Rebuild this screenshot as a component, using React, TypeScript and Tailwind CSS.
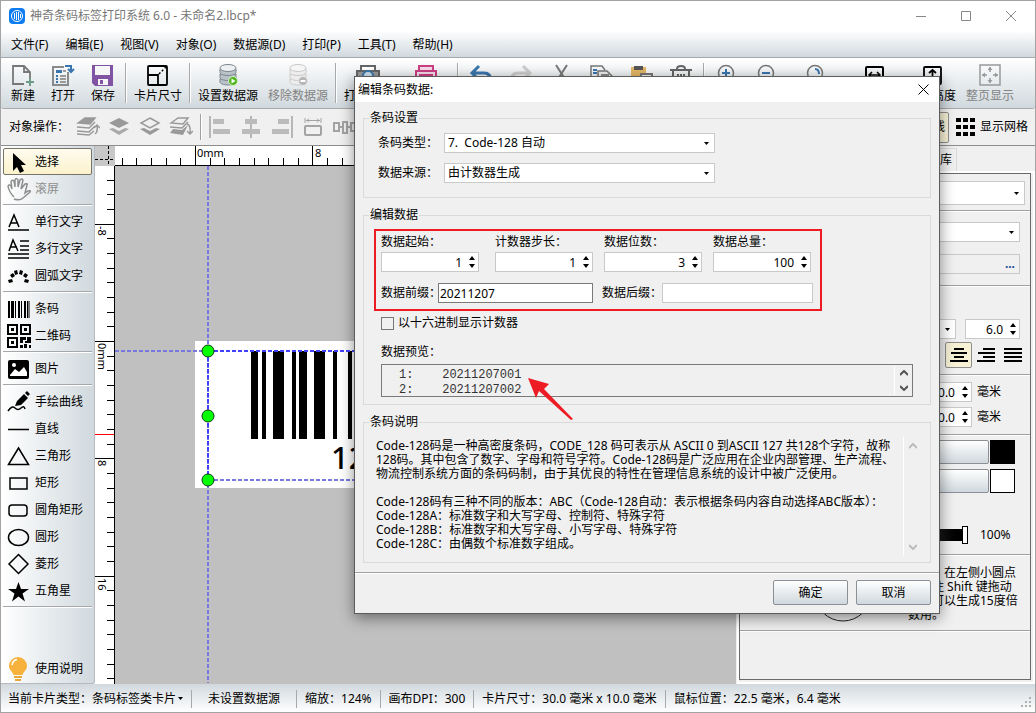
import React from 'react';

const separator = "h-[2px] shrink-0 border-t border-[#a0a0a0] bg-white";
const gradientButton = "border border-[#8a9095] rounded-[2px] bg-linear-to-b from-white to-[#d0d8dd]";

const menus = ['文件(F)', '编辑(E)', '视图(V)', '对象(O)', '数据源(D)', '打印(P)', '工具(T)', '帮助(H)'];

/* ---------- icons ---------- */

const Svg: React.FC<{ size?: number; children: React.ReactNode }> = ({ size = 24, children }) => (
  <svg width={size} height={size} viewBox="0 0 24 24" fill="none" stroke="currentColor" strokeWidth="2" aria-hidden="true">
    {children}
  </svg>
);

const Database: React.FC<{ off?: boolean }> = ({ off }) => (
  <Svg>
    <g stroke={off ? '#c9c9c9' : '#7d858b'} strokeWidth="1" fill={off ? '#ededed' : '#b9c2c8'}>
      <path d="M4 16v3c0 1.700 3.500 3 8 3s8-1.300 8-3v-3z" />
      <path d="M4 11v3.500c0 1.700 3.500 3 8 3s8-1.300 8-3V11z" />
      <path d="M4 6v3.500c0 1.700 3.500 3 8 3s8-1.300 8-3V6z" />
      <ellipse cx="12" cy="5" rx="8" ry="3.500" fill={off ? '#f6f6f6' : '#eef1f3'} />
    </g>
    <circle cx="17" cy="18" r="4.500" fill={off ? '#b5b5b5' : '#52b51e'} stroke={off ? '#e6e6e6' : '#d9f0cb'} strokeWidth="1" />
    {off ? <path d="M14.500 18h5" stroke="#fff" /> : <path d="M15.500 15.500v5l4-2.500z" fill="#fff" stroke="none" />}
  </Svg>
);

const icons: Record<string, React.ReactNode> = {
  new: (
    <Svg>
      <path d="M13 21H2V3h11l6 6v6M13 3v6h6" stroke="#777" strokeWidth="1.800" />
      <path d="M19 15v8M15 19h8" stroke="#6f9c86" />
    </Svg>
  ),
  open: (
    <Svg>
      <path d="M13 4H2v18h15V9" stroke="#8a8a8a" />
      <path d="M5 7h6v3H5z" fill="#3a76ad" stroke="none" />
      <path d="M5 13h2M5 16h2M5 19h2" stroke="#3a76ad" />
      <path d="M9 13h6M9 16h6M9 19h6M12 8h3" stroke="#9a9a9a" />
      <path d="M14 3h6v5M17 6l3 3 3-3" stroke="#3a76ad" />
    </Svg>
  ),
  save: (
    <Svg>
      <path d="M1 2h21v21H4l-3-3z" fill="#8054a3" stroke="none" />
      <path d="M4 3h15v9H4zM7 16h10v6H7z" fill="#f6f6f6" stroke="none" />
      <path d="M9 17h3v4H9z" fill="#8054a3" stroke="none" />
    </Svg>
  ),
  card: (
    <Svg>
      <rect x="2" y="3" width="19" height="19" rx="1" strokeWidth="1.800" />
      <path d="M2 12h10v10" strokeWidth="1.800" />
      <path d="M13 11l7-7" strokeDasharray="2 2" strokeWidth="1.500" />
    </Svg>
  ),
  db: <Database />,
  dbOff: <Database off />,
  preview: (
    <Svg>
      <path d="M5 8V3h14v5M1 8h22v10H1z" stroke="#666" fill="#9a9a9a" />
      <path d="M6 4h12v3H6z" fill="#fff" stroke="none" />
      <circle cx="12" cy="13" r="5" stroke="#3a76ad" fill="#cfe0ee" />
    </Svg>
  ),
  print: (
    <Svg>
      <path d="M5 7V3h14v4M2 18V8h20v10zM5 12h14" stroke="#cc3f85" fill="#f6dce9" />
    </Svg>
  ),
  undo: (
    <Svg>
      <path d="M10 3L3 10l7 7M3 10h12q7 0 7 8" stroke="#3a76ad" strokeWidth="3" />
    </Svg>
  ),
  redo: (
    <Svg>
      <path d="M14 3l7 7-7 7M21 10H9q-7 0-7 8" stroke="#cdcdcd" strokeWidth="3" />
    </Svg>
  ),
  cut: (
    <Svg>
      <path d="M7 2l9 14M18 2L9 16" stroke="#777" />
      <circle cx="7" cy="19" r="3" stroke="#666" />
      <circle cx="17" cy="19" r="3" stroke="#666" />
    </Svg>
  ),
  copy: (
    <Svg>
      <path d="M9 18H2V3h11l3 4" stroke="#777" strokeWidth="1.500" />
      <path d="M4 7h4M4 10h4M4 14h4" stroke="#3a76ad" />
      <path d="M9 8h9l5 5v9H9z" stroke="#777" strokeWidth="1.500" fill="#eee" />
      <path d="M12 12h8" stroke="#888" />
    </Svg>
  ),
  paste: (
    <Svg>
      <path d="M2 4h15v16H2z" fill="#e5b765" stroke="none" />
      <path d="M5 3h9v4H5z" fill="#555" stroke="none" />
      <path d="M12 11h11v12H12z" stroke="#777" fill="#f4f4f4" />
      <path d="M14 14h7" stroke="#888" />
    </Svg>
  ),
  trash: (
    <Svg>
      <path d="M1 7h22M8 6q0-3 4-3t4 3M4 8v14h16V8M9 11v8M12 11v8M15 11v8" stroke="#666" />
    </Svg>
  ),
  zoomIn: (
    <Svg>
      <circle cx="11" cy="10" r="7.500" stroke="#777" strokeWidth="1.500" />
      <path d="M7 10h8M11 6v8" stroke="#3a76ad" />
    </Svg>
  ),
  zoomOut: (
    <Svg>
      <circle cx="11" cy="10" r="7.500" stroke="#777" strokeWidth="1.500" />
      <path d="M7 10h8" stroke="#3a76ad" />
    </Svg>
  ),
  zoom: (
    <Svg>
      <circle cx="11" cy="10" r="7.500" stroke="#777" strokeWidth="1.500" />
      <path d="M11 6q4 0 4 5" stroke="#3a76ad" />
    </Svg>
  ),
  fitWidth: (
    <Svg>
      <rect x="4" y="4" width="17" height="17" rx="1" />
      <path d="M7 12h11M10 9l-3 3 3 3M15 9l3 3-3 3" strokeWidth="1.500" />
    </Svg>
  ),
  fitHeight: (
    <Svg>
      <rect x="4" y="4" width="17" height="17" rx="1" strokeWidth="1.800" />
      <path d="M12.500 7v11M9 10l3.500-3 3.500 3" strokeWidth="1.800" />
    </Svg>
  ),
  fitPage: (
    <Svg>
      <rect x="2" y="2" width="20" height="20" strokeWidth="1.500" stroke="#999" />
      <path d="M12 4v5M12 20v-5M4 12h5M20 12h-5" stroke="#999" strokeWidth="1.500" />
      <path d="M9.500 7l2.500-3 2.500 3zM9.500 17l2.500 3 2.500-3zM7 9.500l-3 2.500 3 2.500zM17 9.500l3 2.500-3 2.500z" fill="#999" stroke="none" />
    </Svg>
  ),
};

/* ---------- toolbar ---------- */

interface ToolItemProps {
  icon: string;
  label: string;
  disabled?: boolean;
  iconOnly?: boolean;
  wide?: string;
}

const ToolItem: React.FC<ToolItemProps> = ({ icon, label, disabled, iconOnly, wide = 'w-[40px]' }) => (
  <button
    aria-label={label}
    className={`${wide} flex shrink-0 flex-col items-center pt-[5px] ${disabled ? 'text-[#838383]' : 'text-black'}`}
  >
    {icons[icon]}
    {!iconOnly && <span className="h-[18px] leading-[18px]">{label}</span>}
  </button>
);

const Divider = () => <span className="mx-[2px] my-[5px] w-[2px] shrink-0 border-l border-[#a9a9a9] bg-white" />;

const Toolbar = () => (
  <div className="flex h-[51px] shrink-0 overflow-hidden rounded-b-[3px] border-b border-[#a5a9ac] bg-linear-to-b from-white to-[#d1d9de] pl-[2px]">
    <ToolItem icon="new" label="新建" />
    <ToolItem icon="open" label="打开" />
    <ToolItem icon="save" label="保存" />
    <Divider />
    <ToolItem icon="card" label="卡片尺寸" wide="w-[58px]" />
    <Divider />
    <ToolItem icon="db" label="设置数据源" wide="w-[70px]" />
    <ToolItem icon="dbOff" label="移除数据源" wide="w-[70px]" disabled />
    <Divider />
    <ToolItem icon="preview" label="打印预览" wide="w-[58px]" />
    <ToolItem icon="print" label="打印标签" wide="w-[58px]" iconOnly />
    <Divider />
    <ToolItem icon="undo" label="撤消" iconOnly />
    <ToolItem icon="redo" label="重做" disabled iconOnly />
    <ToolItem icon="cut" label="剪切" iconOnly />
    <ToolItem icon="copy" label="复制" iconOnly />
    <ToolItem icon="paste" label="粘贴" iconOnly />
    <ToolItem icon="trash" label="删除" iconOnly />
    <Divider />
    <ToolItem icon="zoomIn" label="放大" iconOnly />
    <ToolItem icon="zoomOut" label="缩小" iconOnly />
    <ToolItem icon="zoom" label="实际大小" wide="w-[58px]" iconOnly />
    <ToolItem icon="fitWidth" label="适合宽度" wide="w-[58px]" iconOnly />
    <ToolItem icon="fitHeight" label="适合高度" wide="w-[58px]" />
    <ToolItem icon="fitPage" label="整页显示" wide="w-[58px]" disabled />
  </div>
);

const arrangeIcons = [
  <g key="a">
    <path d="M2 8l7-5h10l-5 6z" fill="#999" />
    <path d="M1 12l12 1 6-6M1 16l12 1 6-6M1 19l12 1 5-4" />
    <path d="M19 19q3-2 2-8M18 13l3-3 3 3" />
  </g>,
  <g key="b">
    <path d="M12 3l10 5-10 5L2 8z" fill="#999" stroke="none" />
    <path d="M2 14l4-1 6 3 6-3 4 1-10 6z" fill="#aaa" stroke="none" />
  </g>,
  <g key="c">
    <path d="M12 3l9 5-9 5-9-5z" />
    <path d="M2 14l4-1 6 3 6-3 4 1-10 6z" fill="#999" stroke="none" />
  </g>,
  <g key="d">
    <path d="M2 8l7-5h10l-5 6zM1 12l12 1 6-6" />
    <path d="M1 18l3-4 9 1 6-5-5 10z" fill="#999" stroke="none" />
    <path d="M18 9q4 1 3 9M18 16l3 3 3-3" />
  </g>,
];

const alignIcons = [
  <g key="a">
    <path d="M2 1v22" strokeWidth="1.500" />
    <path d="M5 4h11v5H5zM5 14h17v5H5z" fill="#bbb" stroke="none" />
  </g>,
  <g key="b">
    <path d="M12 1v22" strokeWidth="1.500" />
    <path d="M6 4h12v5H6zM3 14h18v5H3z" fill="#bbb" stroke="none" />
  </g>,
  <g key="c">
    <path d="M22 1v22" strokeWidth="1.500" />
    <path d="M8 4h11v5H8zM2 14h17v5H2z" fill="#bbb" stroke="none" />
  </g>,
  <g key="d">
    <path d="M4 3v5M20 3v5M5 5.500h14M8 3.500l-2 2 2 2M16 3.500l2 2-2 2" strokeWidth="1" />
    <rect x="4" y="11" width="16" height="9" rx="1" />
  </g>,
  <g key="e">
    <path d="M2 8h5v8H2zM11 7h4v11h-4zM19 8h5v8h-5zM7 12h4M15 12h4" />
  </g>,
];

const ArrangeBar = () => (
  <div className="flex h-[37px] shrink-0 items-center justify-between border-b border-[#8d8d8d] pr-[7px] pl-[8px]">
    <div className="flex items-center">
      <span className="w-[67px]">对象操作：</span>
      {arrangeIcons.map((shape, i) => (
        <button key={i} aria-label={`排列 ${i + 1}`} className="mr-[7px] text-[#999]">
          <svg width="24" height="24" viewBox="0 0 24 24" fill="none" stroke="currentColor" strokeWidth="1.500">{shape}</svg>
        </button>
      ))}
      <span className="h-[26px] w-[2px] border-l border-[#a0a0a0] bg-white" />
      {alignIcons.map((shape, i) => (
        <button key={i} aria-label={`对齐 ${i + 1}`} className="ml-[6px] w-[25px] text-[#a3a3a3]">
          <svg width="24" height="24" viewBox="0 0 24 24" fill="none" stroke="currentColor" strokeWidth="2">{shape}</svg>
        </button>
      ))}
    </div>
    <div className="flex items-center">
      <button className="h-[31px] rounded-[2px] border border-[#8d8d8d] bg-[#f7f1d5] pr-[3px] pl-6">显示标线</button>
      <button className="ml-[7px] flex items-center gap-[5px]">
        <svg width="19" height="18" viewBox="0 0 19 18" aria-hidden="true">
          <path d="M0 0h5v4H0zM7 0h5v4H7zM14 0h5v4h-5zM0 7h5v4H0zM7 7h5v4H7zM14 7h5v4h-5zM0 14h5v4H0zM7 14h5v4H7zM14 14h5v4h-5z" />
        </svg>
        显示网格
      </button>
    </div>
  </div>
);

/* ---------- left tools ---------- */

interface Tool {
  label: string;
  shape: React.ReactNode;
}

const toolGroups: Tool[][] = [
  [
    {
      label: '选择',
      shape: <path d="M6 3v18l4-4 3 6 4-2-3-6h5z" fill="currentColor" stroke="none" />,
    },
    {
      label: '滚屏',
      shape: (
        <path
          d="M7 20Q2 15 1 9q1-2 3 0l1 3-1-7q1-3 3-1l1 6V3q1-3 3 0v7l2-7q2-2 3 0l-2 9 4-5q3-1 2 1l-2 8 3-2q3-1 2 1l-7 6q-3 3-9 1"
          strokeWidth="1.500"
        />
      ),
    },
  ],
  [
    {
      label: '单行文字',
      shape: <path d="M2 17L7 5l5 12M4 13h7M1 20h21" strokeWidth="1.500" />,
    },
    {
      label: '多行文字',
      shape: <path d="M2 14L6 3l5 11M4 10h6M13 4h9M13 9h9M13 13h9M1 17h21M1 21h21" strokeWidth="1.500" />,
    },
    {
      label: '圆弧文字',
      shape: (
        <path
          d="M1 16l4-1 1 3-4 1zM3 11l3-2 2 3-3 2zM7 7l3-1 1 4-3 1zM13 6l3 1-1 4-3-1zM18 9l3 2-2 3-3-2zM18 15l4 1-1 3-4-1z"
          fill="currentColor"
          stroke="none"
        />
      ),
    },
  ],
  [
    {
      label: '条码',
      shape: (
        <path
          d="M1 4h2v17H1zM4 4h3v17H4zM8 4h1v17H8zM11 4h2v17h-2zM14 4h1v17h-1zM17 4h2v17h-2zM20 4h1v17h-1zM21.500 4h1v17h-1z"
          fill="currentColor"
          stroke="none"
        />
      ),
    },
    {
      label: '二维码',
      shape: (
        <g>
          <path d="M1 1h9v9H1zM14 1h9v9h-9zM1 14h9v9H1z" />
          <path
            d="M4 4h3v3H4zM17 4h3v3h-3zM4 17h3v3H4zM13 13h6v3h-3v3h-3zM20 13h4v6h-6v-2h2zM13 21h3v3h-3zM17 20h3v4h-3zM22 21h2v3h-2z"
            fill="currentColor"
            stroke="none"
          />
        </g>
      ),
    },
  ],
  [
    {
      label: '图片',
      shape: (
        <g>
          <rect x="1" y="3" width="21" height="19" rx="2" fill="currentColor" stroke="none" />
          <path d="M3 18l5-6 4 3 5-5 3 5v4H3z" fill="#fff" stroke="none" />
          <circle cx="7" cy="8" r="2" fill="#fff" stroke="none" />
        </g>
      ),
    },
  ],
  [
    {
      label: '手绘曲线',
      shape: (
        <g>
          <path d="M8 16l2-5 7-7 4 4-7 7zM18 3l2-2 3 3-2 2z" fill="currentColor" stroke="none" />
          <path d="M1 21q4-6 7-3t6 0 4 1" strokeWidth="1.500" />
        </g>
      ),
    },
    { label: '直线', shape: <path d="M1 12.500h21" strokeWidth="1.500" /> },
    { label: '三角形', shape: <path d="M11.500 4l10 16.500h-20z" strokeWidth="1.500" /> },
    { label: '矩形', shape: <rect x="3" y="7" width="17" height="11" strokeWidth="1.500" /> },
    { label: '圆角矩形', shape: <rect x="2" y="7" width="18" height="11" rx="3" strokeWidth="1.500" /> },
    { label: '圆形', shape: <ellipse cx="11.500" cy="12.500" rx="10" ry="8" strokeWidth="1.500" /> },
    { label: '菱形', shape: <path d="M11.500 2.500l9.500 9.500-9.500 9.500L2 12z" strokeWidth="1.500" /> },
    {
      label: '五角星',
      shape: <path d="M11.500 3l2.500 7h8l-6.500 4.500 2.500 8-6.500-5-6.500 5 2.500-8L1 10h8z" fill="currentColor" stroke="none" />,
    },
  ],
];

const Sidebar = () => (
  <aside className="flex w-[94px] shrink-0 flex-col rounded-br-[3px] border-r border-b border-[#b4babe] bg-linear-to-r from-white to-[#d1d9de] px-[2px] pt-[2px]">
    {toolGroups.map((group, i) => (
      <div key={i}>
        {group.map((tool) => (
          <button
            key={tool.label}
            className={`flex h-[27px] w-full items-center gap-[4px] rounded-[2px] border pl-[3px] ${
              tool.label === '选择' ? 'border-[#77756a] bg-linear-to-b from-[#fffbee] to-[#fbf2cc]' : 'border-transparent'
            } ${tool.label === '滚屏' ? 'text-[#8f8f8f]' : 'text-black'}`}
          >
            <Svg>{tool.shape}</Svg>
            {tool.label}
          </button>
        ))}
        <div className="my-[2px] h-[2px] border-t border-[#a4a8aa] bg-white" />
      </div>
    ))}
    <button className="mt-auto flex h-[28px] w-full items-center gap-[4px] pl-[4px]">
      <svg width="24" height="26" viewBox="0 0 24 26" aria-hidden="true">
        <path d="M11 1a9 9 0 0 1 9 9c0 4-4 6-4.500 9h-9C6 16 2 14 2 10a9 9 0 0 1 9-9z" fill="#f6b23c" />
        <path d="M5 9q1-5 5-5.500" stroke="#fff" strokeWidth="1.500" fill="none" />
        <path d="M7 20h8v2H7zM8 23h6v2H8z" fill="#e9a93a" />
      </svg>
      使用说明
    </button>
  </aside>
);

/* ---------- canvas ---------- */

const MM = 14.67;
const marks = Array.from({ length: 44 }, (_, i) => i - 12);

const Rulers = () => (
  <>
    <div className="h-[20px] bg-[#c8c8c8]">
      <svg width="20" height="20" stroke="#000" strokeDasharray="3 2">
        <path d="M13.500 0v20M0 13.500h20" />
      </svg>
    </div>
    <div className="overflow-hidden border-b border-black bg-white">
      <svg width="640" height="19" stroke="#000">
        {marks.map((m) => {
          const x = Math.round(80 + m * MM) + 0.5;
          return <line key={m} x1={x} x2={x} y1={m % 8 === 0 ? 0 : 12} y2="19" />;
        })}
        <text x="82" y="11" fontSize="11" stroke="none">0mm</text>
        <text x="200" y="11" fontSize="11" stroke="none">8</text>
      </svg>
    </div>
    <div className="overflow-hidden border-r border-black bg-white">
      <svg width="19" height="517" stroke="#000">
        {marks.map((m) => {
          const y = Math.round(175 + m * MM) + 0.5;
          return <line key={m} y1={y} y2={y} x1={m % 8 === 0 ? 0 : 12} x2="19" />;
        })}
        <path d="M0 268.500h19" stroke="#f00" />
        <g fontSize="11" stroke="none">
          <text transform="translate(3 60) rotate(90)">-8</text>
          <text transform="translate(3 177) rotate(90)">0mm</text>
          <text transform="translate(3 294) rotate(90)">8</text>
          <text transform="translate(3 412) rotate(90)">16</text>
        </g>
      </svg>
    </div>
  </>
);

const bars = [[136, 7], [147, 4], [158, 11], [177, 4], [184, 8], [199, 11], [218, 4], [233, 4]];

const Canvas = () => (
  <main className="grid min-w-0 flex-1 grid-cols-[20px_1fr] grid-rows-[20px_1fr] overflow-hidden">
    <Rulers />
    <div className="overflow-hidden bg-[#c0c0c0]">
      <svg width="622" height="517">
        <rect x="80" y="175" width="442" height="147" fill="#fff" />
        {bars.map(([x, w]) => (
          <rect key={x} x={x} y="185" width={w} height="88" />
        ))}
        <text x="216" y="303" fontSize="31" fontWeight="500">12</text>
        <g stroke="#7878e0" strokeWidth="2" strokeDasharray="4 2">
          <path d="M93 0v517M0 185h93M93 314h529" />
          <path d="M93 185v129M93 185h529" stroke="#4040ff" />
        </g>
        <g fill="#00ff00" stroke="#123a12">
          <circle cx="93" cy="185" r="6" />
          <circle cx="93" cy="250" r="6" />
          <circle cx="93" cy="314" r="6" />
        </g>
      </svg>
    </div>
  </main>
);

/* ---------- form parts ---------- */

const Select: React.FC<{ id: string; label?: string; value: string; className: string }> = ({ id, label, value, className }) => (
  <div className={`relative ${className}`}>
    <select
      id={id}
      aria-label={label}
      defaultValue={value}
      className="block h-full w-full appearance-none border border-[#c9c9c9] bg-white pr-4 pl-[3px] leading-[18px]"
    >
      <option value={value}>{value}</option>
    </select>
    <svg width="5" height="3" viewBox="0 0 5 3" className="pointer-events-none absolute inset-y-0 right-[6px] my-auto" aria-hidden="true">
      <path d="M0 0h5L2.500 3z" />
    </svg>
  </div>
);

const Spin: React.FC<{ id: string; label?: string; value: string; className: string }> = ({ id, label, value, className }) => (
  <div className={`relative h-[20px] ${className}`}>
    <input
      id={id}
      aria-label={label}
      defaultValue={value}
      className="block h-full w-full border border-[#c9c9c9] bg-white pr-[16px] text-right leading-[18px]"
    />
    <svg width="6" height="12" viewBox="0 0 6 12" className="pointer-events-none absolute inset-y-0 right-[4px] my-auto" aria-hidden="true">
      <path d="M0 4h6L3 0zM0 8h6L3 12z" />
    </svg>
  </div>
);

/* ---------- right panel ---------- */

const AlignLines: React.FC<{ d: string }> = ({ d }) => (
  <svg width="18" height="15" stroke="#000" strokeWidth="2" aria-hidden="true">
    <path d={d} />
  </svg>
);

const RightPanel = () => (
  <aside className="flex w-[299px] shrink-0 flex-col pl-px">
    <div className="flex h-[25px] w-[220px] items-end">
      {['属性', '图层', '素材库'].map((tab) => (
        <button key={tab} className="h-[23px] flex-1 border border-b-0 border-[#dadada] pr-[4px] text-right">{tab}</button>
      ))}
    </div>
    <div className="flex flex-1 border-2 border-white pb-[2px]">
      <div className="mr-[2px] flex flex-1 flex-col border border-[#696969]">
        <Select id="object" label="对象" value="条码" className="mt-[7px] mr-[5px] ml-[5px] h-[24px]" />
        <div className={`${separator} mt-[5px]`} />
        <Select id="kind" label="类型" value="Code-128 自动" className="mt-[10px] mr-[10px] ml-[70px] h-[20px]" />
        <button className="mt-[12px] mr-[10px] ml-[70px] h-[20px] border border-[#c9c9c9] pr-[4px] text-right leading-[18px] font-bold text-[#1a4c98]">...</button>
        <div className={`${separator} mt-[11px]`} />
        <div className="mt-[32px] mr-[10px] flex justify-end gap-[9px]">
          <Select id="font" label="字体" value="Arial" className="h-[20px] w-[180px]" />
          <Spin id="fontSize" label="字号" value="6.0" className="w-[55px]" />
        </div>
        <div className="mt-[3px] mr-[8px] flex h-[26px] items-center justify-end">
          <button aria-label="左对齐" className="mr-[5px]"><AlignLines d="M0 1h13M0 5h18M0 9h13M0 13h18" /></button>
          <button aria-label="居中" className="flex h-full w-[27px] items-center justify-center rounded-[2px] border border-[#8d8d8d] bg-[#f7f1d5]">
            <AlignLines d="M4 1h10M1 5h16M4 9h10M0 13h18" />
          </button>
          <button aria-label="右对齐" className="ml-[5px]"><AlignLines d="M6 1h12M1 5h17M6 9h12M0 13h18" /></button>
          <button aria-label="两端对齐" className="ml-[9px]"><AlignLines d="M0 1h18M0 5h18M0 9h18M0 13h18" /></button>
        </div>
        <div className={`${separator} mt-[6px]`} />
        <div className="mt-[6px] flex flex-col gap-[5px]">
          {['宽度', '高度'].map((name) => (
            <div key={name} className="mr-[29px] flex items-center justify-end gap-[5px]">
              <Spin id={name} label={name} value="0.0" className="w-[90px]" />
              <label htmlFor={name}>毫米</label>
            </div>
          ))}
        </div>
        <div className={`${separator} mt-[7px]`} />
        <div className="mt-[4px] mr-[15px] flex h-[24px] justify-end gap-px">
          <button aria-label="前景色" className={`${gradientButton} w-[120px]`} />
          <span className="w-[25px] bg-black" />
        </div>
        <div className="mt-[5px] mr-[15px] flex h-[24px] justify-end gap-px">
          <button aria-label="背景色" className={`${gradientButton} w-[120px]`} />
          <span className="w-[25px] border border-black bg-white" />
        </div>
        <div className="mt-[33px] mr-[17px] flex h-[18px] items-center justify-end gap-[12px]">
          <input
            type="range"
            aria-label="不透明度"
            defaultValue={100}
            className="h-[12px] w-[140px] appearance-none bg-linear-to-r from-white to-black [&::-webkit-slider-thumb]:h-[18px] [&::-webkit-slider-thumb]:w-[6px] [&::-webkit-slider-thumb]:appearance-none [&::-webkit-slider-thumb]:border [&::-webkit-slider-thumb]:border-black [&::-webkit-slider-thumb]:bg-white"
          />
          <span className="w-[33px]">100%</span>
        </div>
        <div className={`${separator} mt-[10px]`} />
        <div className="mt-[9px] mr-[9px] flex items-center justify-end gap-[35px] leading-[14px]">
          <svg width="60" height="58" fill="none" stroke="#222" aria-hidden="true">
            <circle cx="30" cy="28" r="28" />
          </svg>
          <p className="w-[113px]">旋转：在左侧小圆点<br />上按住 Shift 键拖动<br />鼠标可以生成15度倍<br />数用。</p>
        </div>
        <div className={`${separator} mt-[7px]`} />
      </div>
    </div>
  </aside>
);

/* ---------- dialog ---------- */

const Group: React.FC<{ title: string; className: string; children: React.ReactNode }> = ({ title, className, children }) => (
  <fieldset className={`mx-[8px] border border-[#dadada] ${className}`}>
    <legend className="ml-[5px] h-[18px] px-[1px] leading-[18px]">{title}</legend>
    {children}
  </fieldset>
);

const ScrollArrows: React.FC<{ className: string }> = ({ className }) => (
  <div className={`flex w-[18px] shrink-0 flex-col items-center justify-between border-l border-white ${className}`}>
    <svg width="8" height="6" fill="none" stroke="currentColor" strokeWidth="2"><path d="M0 5l4-4 4 4" /></svg>
    <svg width="8" height="6" fill="none" stroke="currentColor" strokeWidth="2"><path d="M0 1l4 4 4-4" /></svg>
  </div>
);

const counters = [
  { id: 'start', label: '数据起始：', value: '1' },
  { id: 'step', label: '计数器步长：', value: '1' },
  { id: 'digits', label: '数据位数：', value: '3' },
  { id: 'total', label: '数据总量：', value: '100' },
];

const BarcodeDialog = () => (
  <div
    role="dialog"
    aria-label="编辑条码数据"
    className="absolute top-[75px] left-[353px] w-[586px] border border-[#5c5c5c] bg-[#f0f0f0] shadow-[0_4px_14px_rgba(0,0,0,0.45)]"
  >
    <div className="flex h-[25px] items-center justify-between bg-white pr-[10px] pl-[3px]">
      <h2>编辑条码数据:</h2>
      <button aria-label="关闭">
        <svg width="11" height="11" stroke="#000"><path d="M.5 .5l10 10M10.500 .5l-10 10" /></svg>
      </button>
    </div>

    <Group title="条码设置" className="mt-[7px] pt-[6px] pb-[14px]">
      <div className="flex items-center pl-[14px]">
        <label htmlFor="codeType" className="w-[66px]">条码类型：</label>
        <Select id="codeType" value={'7.\u00a0 Code-128 自动'} className="h-[20px] w-[271px]" />
      </div>
      <div className="mt-[10px] flex items-center pl-[14px]">
        <label htmlFor="source" className="w-[66px]">数据来源：</label>
        <Select id="source" value="由计数器生成" className="h-[20px] w-[271px]" />
      </div>
    </Group>

    <Group title="编辑数据" className="mt-[8px] pb-[7px]">
      <div className="mt-[5px] ml-[10px] w-[448px] border-2 border-[#ed1c24] pb-[6px] pl-[5px]">
        <div className="grid grid-cols-[114px_109px_109px_98px]">
          {counters.map((c) => (
            <div key={c.id}>
              <label htmlFor={c.id} className="block h-[21px] leading-[21px]">{c.label}</label>
              <Spin id={c.id} value={c.value} className="w-[98px]" />
            </div>
          ))}
        </div>
        <div className="mt-[11px] flex items-center">
          <label htmlFor="prefix" className="w-[57px]">数据前缀：</label>
          <input id="prefix" defaultValue="20211207" className="h-[20px] w-[155px] border border-[#7a7a7a] bg-white px-px" />
          <label htmlFor="suffix" className="ml-[9px] w-[60px]">数据后缀：</label>
          <input id="suffix" className="h-[20px] w-[151px] border border-[#c9c9c9] bg-white px-px" />
        </div>
      </div>
      <div className="mt-[2px] flex h-[20px] items-center pl-[17px]">
        <input id="hex" type="checkbox" className="h-[13px] w-[13px] appearance-none border border-[#777]" />
        <label htmlFor="hex" className="ml-[4px]">以十六进制显示计数器</label>
      </div>
      <div className="mt-[9px] h-[22px] pl-[17px] leading-[20px]">数据预览：</div>
      <div className="mx-[17px] flex h-[33px] overflow-hidden border border-[#7a7a7a]">
        <div className="flex-1 pt-[3px] pl-[17px] font-['Liberation_Mono',monospace] leading-[15px] whitespace-pre text-[#333]">
          <div>{'1:    20211207001'}</div>
          <div>{'2:    20211207002'}</div>
        </div>
        <ScrollArrows className="my-px py-[4px] text-[#555]" />
      </div>
    </Group>

    <Group title="条码说明" className="mt-[8px] pb-[6px]">
      <div className="mt-[6px] mr-[9px] flex h-[119px] pl-[12px]">
        <div className="flex-1 pt-[2px] leading-[14px]">
          Code-128码是一种高密度条码，CODE_128 码可表示从 ASCII 0 到ASCII 127 共128个字符，故称<br />
          128码。其中包含了数字、字母和符号字符。Code-128码是广泛应用在企业内部管理、生产流程、<br />
          物流控制系统方面的条码码制，由于其优良的特性在管理信息系统的设计中被广泛使用。<br />
          <br />
          Code-128码有三种不同的版本：ABC（Code-128自动：表示根据条码内容自动选择ABC版本）：<br />
          Code-128A：标准数字和大写字母、控制符、特殊字符<br />
          Code-128B：标准数字和大写字母、小写字母、特殊字符<br />
          Code-128C：由偶数个标准数字组成。
        </div>
        <ScrollArrows className="py-[6px] text-[#bcbcbc]" />
      </div>
    </Group>

    <div className={`${separator} mt-[9px]`} />
    <div className="flex justify-end gap-[8px] pt-[6px] pr-[8px] pb-[8px]">
      <button className={`${gradientButton} h-[25px] w-[75px]`}>确定</button>
      <button className={`${gradientButton} h-[25px] w-[75px]`}>取消</button>
    </div>

    <svg width="46" height="43" className="pointer-events-none absolute top-[301px] left-[173px]" aria-hidden="true">
      <path d="M0 0l21 6-5 5 29 30-2 1-32-29-3 7z" fill="#ed1c24" />
    </svg>
  </div>
);

/* ---------- window ---------- */

const statusItems = ['缩放：124%', '画布DPI：300', '卡片尺寸：30.0 毫米 x 10.0 毫米', '鼠标位置：22.5 毫米，6.4 毫米'];

const StatusBar = () => (
  <footer className="flex h-[28px] shrink-0 items-center bg-linear-to-b from-[#d1d9de] to-white pt-px pl-[7px]">
    <button className="flex items-center gap-[2px] pr-[8px]">
      当前卡片类型：条码标签类卡片
      <svg width="5" height="3" aria-hidden="true"><path d="M0 0h5L2.500 3z" /></svg>
    </button>
    <span className="border-l border-[#a9a9a9] px-[16px]">未设置数据源</span>
    {statusItems.map((item) => (
      <span key={item} className="border-l border-[#a9a9a9] px-[8px]">{item}</span>
    ))}
    <svg width="12" height="12" className="mt-auto mr-[2px] mb-[3px] ml-auto" fill="#b0b0b0" aria-hidden="true">
      <path d="M8 0h2v2H8zM4 4h2v2H4zM8 4h2v2H8zM0 8h2v2H0zM4 8h2v2H4zM8 8h2v2H8z" />
    </svg>
  </footer>
);

export default function App() {
  return (
    <div className="relative flex h-screen flex-col overflow-hidden border border-[#a3a3a3] bg-[#f0f0f0] font-['Noto_Sans','Noto_Sans_CJK_SC',sans-serif] text-[12px] leading-[18px] whitespace-nowrap text-black">
      <header className="flex h-[30px] shrink-0 items-center bg-white pl-[8px] text-[#777]">
        <svg width="16" height="16" viewBox="0 0 16 16" aria-hidden="true">
          <rect width="16" height="16" rx="4" fill="#0d7cf2" />
          <circle cx="8" cy="8" r="5.500" fill="none" stroke="#fff" />
          <path d="M5.500 5v6M7.500 4v8M9.500 4v8M11.500 6v4" stroke="#fff" />
        </svg>
        <h1 className="ml-[5px]">神奇条码标签打印系统 6.0 - 未命名2.lbcp*</h1>
        <div className="mr-[19px] ml-auto flex gap-[35px]">
          <button aria-label="最小化"><svg width="10" height="10" stroke="#888"><path d="M0 5.500h10" /></svg></button>
          <button aria-label="最大化"><svg width="10" height="10" stroke="#888" fill="none"><path d="M.5 .5h9v9h-9z" /></svg></button>
          <button aria-label="关闭窗口"><svg width="10" height="10" stroke="#888"><path d="M0 0l10 10M10 0L0 10" /></svg></button>
        </div>
      </header>
      <nav className="flex h-[27px] shrink-0 items-center gap-[17px] border-b border-[#a5a9ac] bg-linear-to-b from-white to-[#d1d9de] pt-[2px] pl-[10px]">
        {menus.map((menu) => (
          <button key={menu}>{menu}</button>
        ))}
      </nav>
      <Toolbar />
      <ArrangeBar />
      <div className="flex min-h-0 flex-1">
        <Sidebar />
        <Canvas />
        <RightPanel />
      </div>
      <StatusBar />
      <BarcodeDialog />
    </div>
  );
}
